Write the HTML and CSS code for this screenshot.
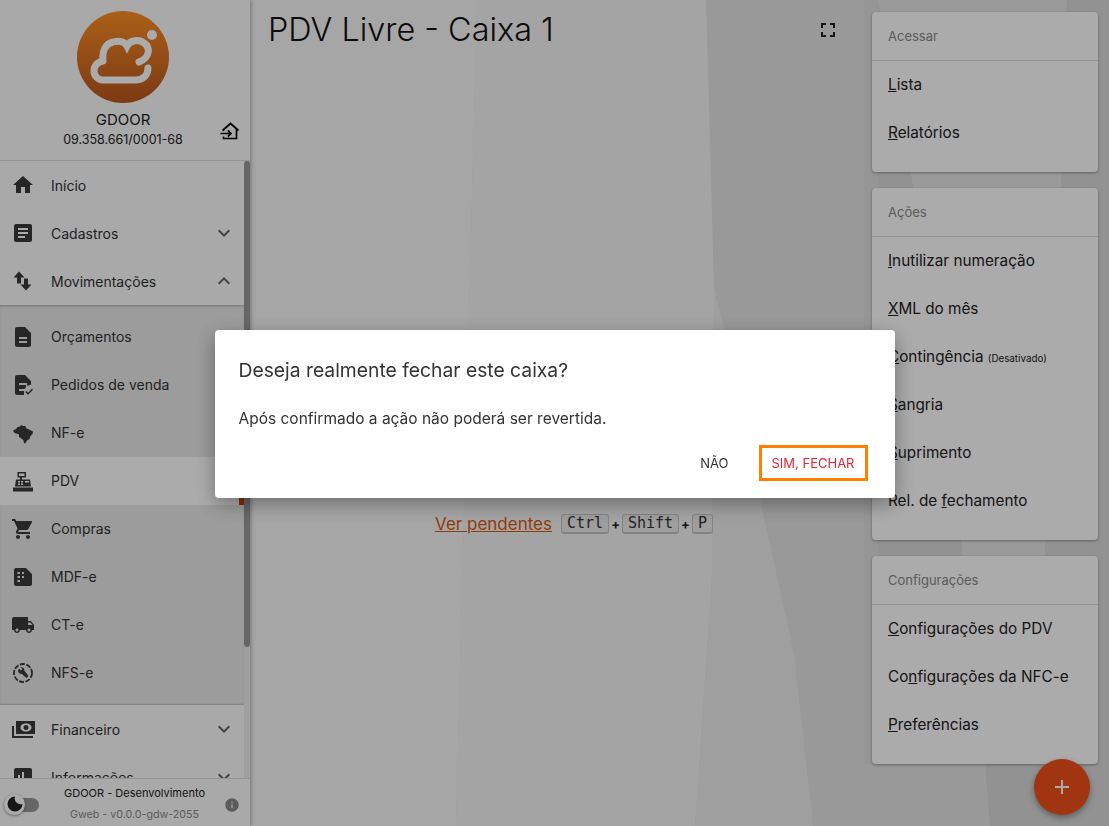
FILE: index.html
```html
<!DOCTYPE html>
<html lang="pt-BR">
<head>
<meta charset="UTF-8">
<title>PDV Livre - Caixa 1</title>
<link rel="stylesheet" href="styles.css">
</head>
<body>
<div class="app">
	<svg class="page-bg" viewBox="0 0 1109 826">
		<rect x="250" y="0" width="614" height="826" fill="#e4e4e4"/>
		<path d="M250 0H477L456 826H250z" fill="#f8f8f8"/>
		<path d="M477 0H706L714 288L712 576L695 826H456z" fill="#f5f5f5"/>
		<path d="M714 288L728 344L766 527L794 654L813 826H695L712 576z" fill="#eeeeee"/>
		<rect x="864" y="0" width="245" height="826" fill="#dadada"/>
		<rect x="864" y="0" width="14" height="826" fill="#e0e0e0"/>
		<path d="M878 0H1067L1061 180L1045 548L1030 764H985L962 548L912 180z" fill="#e6e6e6"/>
		<path d="M864 764H985L990 826H864z" fill="#e4e4e4"/>
	</svg>
	<div class="sidebar">
		<div class="company">
			<svg class="logo" viewBox="0 0 92 92">
				<defs>
					<linearGradient id="logograd" x1="0" y1="0" x2="0" y2="1">
						<stop offset="0" stop-color="#ff8f26"/>
						<stop offset="1" stop-color="#b9561f"/>
					</linearGradient>
				</defs>
				<circle cx="46" cy="46" r="46" fill="url(#logograd)"/>
				<circle cx="75" cy="24" r="5" fill="#fff"/>
				<path d="M26 50C20 51 17 55 17 60C17 65 21 69 26 69H58C66 69 71 64 71 57M26 50C25 41 28 33 36 31C43 29 48 31 50 35C53 29 62 28 67 32C73 36 74 46 62 51" fill="none" stroke="#fff" stroke-width="7" stroke-linecap="round"/>
			</svg>
			<div class="company-name">GDOOR</div>
			<div class="company-doc">09.358.661/0001-68</div>
			<svg class="company-exit" viewBox="0 0 20 18"><path d="M2.500 8.500L10.500 1.500L18.500 8.500M16.500 7V16.500H3.500V14.500M3.500 9V8" fill="none" stroke="#000" stroke-width="1.700"/><path d="M0.500 11.500H11M7.800 8.300L11 11.500L7.800 14.700" fill="none" stroke="#000" stroke-width="1.700"/></svg>
		</div>
		<div class="nav-wrap">
			<div class="nav">
				<a class="nav-item"><svg class="ico" viewBox="0 0 24 24"><path d="M10 20v-6h4v6h5v-8h3L12 3 2 12h3v8z"/></svg><span class="nav-label">Início</span></a>
				<a class="nav-item"><svg class="ico" viewBox="0 0 24 24"><path d="M19 3H5c-1.100 0-2 .9-2 2v14c0 1.100.9 2 2 2h14c1.100 0 2-.9 2-2V5c0-1.100-.9-2-2-2zm-5 14H7v-2h7v2zm3-4H7v-2h10v2zm0-4H7V7h10v2z"/></svg><span class="nav-label">Cadastros</span><svg class="ico chev" viewBox="0 0 24 24"><path d="M16.590 8.590L12 13.170 7.410 8.590 6 10l6 6 6-6z"/></svg></a>
				<a class="nav-item"><svg class="ico" viewBox="0 0 24 24"><path d="M8 2.500L2.500 8.500H6V14.500H10V8.500H13.500zM13 9.500V15.500H9.500L15 21.500L20.500 15.500H17V9.500z"/></svg><span class="nav-label">Movimentações</span><svg class="ico chev" viewBox="0 0 24 24"><path d="M12 8l-6 6 1.410 1.410L12 10.830l4.590 4.580L18 14z"/></svg></a>
				<div class="nav-sub">
					<a class="nav-item"><svg class="ico" viewBox="0 0 24 24"><path d="M14 2H6c-1.100 0-1.990.9-1.990 2L4 20c0 1.100.89 2 1.990 2H18c1.100 0 2-.9 2-2V8l-6-6zm2 16H8v-2h8v2zm0-4H8v-2h8v2z"/></svg><span class="nav-label">Orçamentos</span></a>
					<a class="nav-item"><svg class="ico" viewBox="0 0 24 24"><path d="M14 2H6c-1.100 0-1.990.9-1.990 2L4 20c0 1.100.89 2 1.990 2H13v-4H8v-2h5.500l1.500-1.500V12H8v-2h8v2.800l4-1V8l-6-6z"/><path d="M14.800 18.500L17 20.700L21.500 16.200" fill="none" stroke="#3a3a3a" stroke-width="1.600"/></svg><span class="nav-label">Pedidos de venda</span></a>
					<a class="nav-item"><svg class="ico" viewBox="0 0 24 24"><path d="M2 9.500L5 8L6.500 6L9 5.500L10 4L12 5L14.500 5L15 7L18 8.500L22 10.500L21.500 13L19.500 15L18.500 18L16 19.500L14.500 22L13 22.500L12.500 19.500L10.500 17.500L8 16L8 13.500L5.500 12.500L3.500 12z"/></svg><span class="nav-label">NF-e</span></a>
					<a class="nav-item nav-item-on"><svg class="ico" viewBox="0 0 24 24"><path d="M2 18.500h20v4H2zM4 17.500l1-7h4V8.500H6.500V3H15v5.500h-4v2h8l1 7zM8 4.500V7h5.500V4.500zM7 12v1.500h2V12zM10 12v1.500h2V12zM7 14.500V16h2v-1.500zM10 14.500V16h2v-1.500zM14 12v1.500h4V12z" fill-rule="evenodd"/></svg><span class="nav-label">PDV</span></a>
					<a class="nav-item"><svg class="ico" viewBox="0 0 24 24"><path d="M7 18c-1.100 0-1.990.9-1.990 2S5.900 22 7 22s2-.9 2-2-.9-2-2-2zM1 2v2h2l3.600 7.590-1.350 2.450c-.16.28-.25.61-.25.96 0 1.100.9 2 2 2h12v-2H7.420c-.14 0-.25-.11-.25-.25l.03-.12.9-1.630h7.450c.75 0 1.410-.41 1.750-1.030l3.580-6.490c.08-.14.12-.31.12-.48 0-.55-.45-1-1-1H5.210l-.94-2H1zm16 16c-1.100 0-1.990.9-1.990 2s.89 2 1.990 2 2-.9 2-2-.9-2-2-2z"/></svg><span class="nav-label">Compras</span></a>
					<a class="nav-item"><svg class="ico" viewBox="0 0 24 24"><path d="M5 3h10l6 6v10c0 1.100-.9 2-2 2H5c-1.100 0-2-.9-2-2V5c0-1.100.9-2 2-2zM6.500 7v2H9V7zM11 7v2h2V7zM6.500 11v2H9v-2zM11 11v2h2v-2zM6.500 15v2H9v-2z" fill-rule="evenodd"/></svg><span class="nav-label">MDF-e</span></a>
					<a class="nav-item"><svg class="ico" viewBox="0 0 24 24"><path d="M20 8h-3V4H3c-1.100 0-2 .9-2 2v11h2c0 1.660 1.340 3 3 3s3-1.340 3-3h6c0 1.660 1.340 3 3 3s3-1.340 3-3h2v-5l-3-4zM6 18.500c-.83 0-1.500-.67-1.500-1.500s.67-1.500 1.500-1.500 1.500.67 1.500 1.500-.67 1.500-1.500 1.500zm13.500-9l1.960 2.500H17V9.500h2.500zm-1.500 9c-.83 0-1.500-.67-1.500-1.500s.67-1.500 1.500-1.500 1.500.67 1.500 1.500-.67 1.500-1.500 1.500z"/></svg><span class="nav-label">CT-e</span></a>
					<a class="nav-item"><svg class="ico" viewBox="0 0 24 24"><circle cx="12" cy="12" r="9" fill="none" stroke="#3a3a3a" stroke-width="1.800" stroke-dasharray="5 1.500"/><path d="M8 7.500L10 9.500L11.500 8L9.500 6.500C11.500 5.800 13.500 7 13.300 9.500L17.500 15L15.500 17L10.500 12.800C8 13 6.500 11 7.300 9z"/></svg><span class="nav-label">NFS-e</span></a>
				</div>
				<a class="nav-item"><svg class="ico" viewBox="0 0 24 24"><path d="M5 2h20v13H5zM15 4.500C11.500 4.500 9.500 6.500 9.500 8.500S11.500 12.500 15 12.500 20.500 10.500 20.500 8.500 18.500 4.500 15 4.500z" fill-rule="evenodd" transform="translate(0 2)"/><circle cx="15" cy="10.500" r="2.500"/><path d="M2 9V20H22" fill="none" stroke="#3a3a3a" stroke-width="2"/></svg><span class="nav-label">Financeiro</span><svg class="ico chev" viewBox="0 0 24 24"><path d="M16.590 8.590L12 13.170 7.410 8.590 6 10l6 6 6-6z"/></svg></a>
				<a class="nav-item"><svg class="ico" viewBox="0 0 24 24"><path d="M19 3H5c-1.100 0-2 .9-2 2v14c0 1.100.9 2 2 2h14c1.100 0 2-.9 2-2V5c0-1.100-.9-2-2-2zM9 17H7v-7h2v7zm4 0h-2V7h2v10zm4 0h-2v-4h2v4z"/></svg><span class="nav-label">Informações</span><svg class="ico chev" viewBox="0 0 24 24"><path d="M16.590 8.590L12 13.170 7.410 8.590 6 10l6 6 6-6z"/></svg></a>
			</div>
			<div class="scroll-track"><div class="scroll-thumb"></div></div>
		</div>
		<div class="side-foot">
			<div class="toggle"><div class="toggle-knob"><svg viewBox="0 0 24 24"><path d="M12 2a10 10 0 1 0 10 10 8 8 0 0 1-10-10z"/></svg></div></div>
			<div class="foot-text">
				<div class="foot-a">GDOOR - Desenvolvimento</div>
				<div class="foot-b">Gweb - v0.0.0-gdw-2055</div>
			</div>
			<svg class="foot-info" viewBox="0 0 24 24"><path d="M12 2C6.480 2 2 6.480 2 12s4.480 10 10 10 10-4.480 10-10S17.520 2 12 2zm1 15h-2v-6h2v6zm0-8h-2V7h2v2z"/></svg>
		</div>
	</div>

	<div class="main">
		<div class="title-row">
			<h1 class="title">PDV Livre - Caixa 1</h1>
			<svg class="ico fs" viewBox="0 0 24 24"><path d="M7 14H5v5h5v-2H7v-3zm-2-4h2V7h3V5H5v5zm12 7h-3v2h5v-5h-2v3zM14 5v2h3v3h2V5h-5z"/></svg>
		</div>
		<div class="pending">
			<a class="pending-link">Ver pendentes</a>
			<div class="keys"><kbd>Ctrl</kbd><b>+</b><kbd>Shift</kbd><b>+</b><kbd>P</kbd></div>
		</div>
	</div>

	<div class="aside">
		<div class="card">
			<div class="card-head">Acessar</div>
			<a class="card-item"><u>L</u>ista</a>
			<a class="card-item"><u>R</u>elatórios</a>
		</div>
		<div class="card">
			<div class="card-head">Ações</div>
			<a class="card-item"><u>I</u>nutilizar numeração</a>
			<a class="card-item"><u>X</u>ML do mês</a>
			<a class="card-item"><u>C</u>ontingência <small>(Desativado)</small></a>
			<a class="card-item"><u>S</u>angria</a>
			<a class="card-item"><u>S</u>uprimento</a>
			<a class="card-item">Rel. de <u>f</u>echamento</a>
		</div>
		<div class="card">
			<div class="card-head">Configurações</div>
			<a class="card-item"><u>C</u>onfigurações do PDV</a>
			<a class="card-item">Co<u>n</u>figurações da NFC-e</a>
			<a class="card-item"><u>P</u>referências</a>
		</div>
	</div>
</div>

<div class="fab"><svg viewBox="0 0 24 24"><path d="M19 13h-6v6h-2v-6H5v-2h6V5h2v6h6v2z"/></svg></div>

<div class="scrim">
	<div class="dialog">
		<div class="dialog-title">Deseja realmente fechar este caixa?</div>
		<div class="dialog-text">Após confirmado a ação não poderá ser revertida.</div>
		<div class="dialog-actions">
			<button class="btn">NÃO</button>
			<button class="btn btn-yes">SIM, FECHAR</button>
		</div>
	</div>
</div>
</body>
</html>
```

FILE: styles.css
```css
*{
	margin: 0;
	padding: 0;
	box-sizing: border-box;
}
html, body{
	height: 100%;
	overflow: hidden;
}
body{
	font-family: Inter, "Noto Sans", "Liberation Sans", sans-serif;
	font-size: 14px;
	color: #222;
	background: #e4e4e4;
}
.app{
	display: flex;
	height: 826px;
	position: relative;
}
.page-bg{
	position: absolute;
	left: 0;
	top: 0;
	width: 1109px;
	height: 826px;
}

/* sidebar */
.sidebar{
	width: 250px;
	height: 100%;
	display: flex;
	flex-direction: column;
	background: #fcfcfc;
	box-shadow: 1px 0 4px rgba(0,0,0,0.3);
	position: relative;
	z-index: 2;
}
.company{
	height: 161px;
	flex: none;
	border-bottom: 1px solid #ddd;
	display: flex;
	flex-direction: column;
	align-items: center;
	padding: 11px 4px 0 0;
	position: relative;
}
.logo{
	width: 92px;
	height: 92px;
	flex: none;
}
.company-name{
	margin-top: 8px;
	font-size: 15px;
	line-height: 18px;
}
.company-doc{
	font-size: 12.500px;
	line-height: 18px;
	margin-top: 2px;
}
.company-exit{
	position: absolute;
	right: 10px;
	top: 122px;
	width: 20px;
	height: 18px;
}
.nav-wrap{
	flex: 1;
	min-height: 0;
	display: flex;
	overflow: hidden;
}
.nav{
	flex: 1;
	min-width: 0;
}
.scroll-track{
	width: 6px;
	flex: none;
	background: #eee;
}
.scroll-thumb{
	height: 486px;
	background: #999;
	border-radius: 3px;
}
.nav-item{
	display: flex;
	align-items: center;
	height: 48px;
	padding: 0 8px 0 11px;
	gap: 16px;
	color: #333;
}
.nav-label{
	flex: 1;
	font-size: 14px;
}
.nav-sub .nav-label{
	padding-bottom: 1px;
}
.ico{
	width: 24px;
	height: 24px;
	flex: none;
	fill: #3a3a3a;
}
.chev{
	fill: #666;
}
.nav-sub{
	padding: 8px 0;
	background: #e9e9e9;
	box-shadow: inset 0 3px 3px -2px rgba(0,0,0,0.25), inset 0 -2px 2px -1px rgba(0,0,0,0.2);
}
.nav-item-on{
	background: #fff;
	border-right: 5px solid #d33c10;
}
.side-foot{
	height: 48px;
	flex: none;
	border-top: 1px solid #ddd;
	background: #fcfcfc;
	display: flex;
	align-items: center;
	position: relative;
}
.toggle{
	width: 24px;
	height: 14px;
	margin: 4px 0 0 15px;
	flex: none;
	background: #999;
	border-radius: 7px;
	position: relative;
}
.toggle-knob{
	position: absolute;
	left: -11px;
	top: -4px;
	width: 21px;
	height: 21px;
	border-radius: 50%;
	background: #fff;
	box-shadow: 0 1px 3px rgba(0,0,0,0.4);
	display: flex;
	align-items: center;
	justify-content: center;
}
.toggle-knob svg{
	width: 18px;
	height: 18px;
	fill: #222;
}
.foot-text{
	flex: 1;
	text-align: center;
	font-size: 11px;
	line-height: 21px;
	margin-left: 6px;
	padding-top: 3px;
}
.foot-a{
	color: #222;
}
.foot-b{
	color: #8a8a8a;
	font-size: 10.700px;
}
.foot-info{
	width: 16px;
	height: 16px;
	margin: 4px 10px 0 0;
	fill: #888;
}

/* main */
.main{
	flex: 1;
	min-width: 0;
	position: relative;
	overflow: hidden;
	display: flex;
	flex-direction: column;
}
.title-row{
	display: flex;
	align-items: center;
	justify-content: space-between;
	height: 60px;
	padding: 0 24px 0 18px;
}
.title{
	font-size: 32.400px;
	font-weight: 300;
	color: #111;
	margin-top: -2px;
}
.fs{
	fill: #222;
}
.pending{
	display: flex;
	align-items: center;
	justify-content: center;
	gap: 9px;
	margin-top: 452px;
	padding-left: 34px;
	height: 24px;
}
.pending-link{
	color: #d9590f;
	font-size: 17px;
	text-decoration: underline;
}
.keys{
	display: flex;
	align-items: center;
	gap: 2px;
}
.keys b{
	font-size: 13px;
	font-weight: 700;
}
kbd{
	font-family: "DejaVu Sans Mono", "Liberation Mono", monospace;
	font-size: 15px;
	line-height: 17px;
	padding: 0 5px;
	color: #333;
	background: #ececec;
	border: 1px solid #c4c4c4;
	border-bottom-width: 2px;
	border-radius: 3px;
}

/* right panel */
.aside{
	width: 245px;
	flex: none;
	display: flex;
	flex-direction: column;
	gap: 16px;
	padding: 12px 11px 0 8px;
	position: relative;
}
.card{
	background: #fff;
	border-radius: 4px;
	box-shadow: 0 1px 3px rgba(0,0,0,0.35);
	padding-bottom: 15px;
}
.card-head{
	height: 49px;
	line-height: 48px;
	padding-left: 16px;
	font-size: 13px;
	color: #8a8a8a;
	border-bottom: 1px solid #ddd;
}
.card-item{
	display: block;
	height: 48px;
	line-height: 48px;
	padding-left: 16px;
	font-size: 15.300px;
	color: #222;
	white-space: nowrap;
}
.card-item small{
	font-size: 9.800px;
}

/* fab */
.fab{
	position: fixed;
	right: 19px;
	bottom: 11px;
	width: 56px;
	height: 56px;
	border-radius: 50%;
	background: #f04f1c;
	box-shadow: 0 3px 6px rgba(0,0,0,0.35);
	display: flex;
	align-items: center;
	justify-content: center;
	z-index: 3;
}
.fab svg{
	width: 24px;
	height: 24px;
	fill: #fff;
}

/* dialog */
.scrim{
	position: fixed;
	left: 0;
	top: 0;
	width: 100%;
	height: 100%;
	padding-top: 2px;
	background: rgba(0,0,0,0.33);
	display: flex;
	align-items: center;
	justify-content: center;
	z-index: 10;
}
.dialog{
	width: 680px;
	height: 168px;
	background: #fff;
	border-radius: 4px;
	box-shadow: 0 6px 20px rgba(0,0,0,0.35);
	padding: 24px 27px 17px 24px;
	display: flex;
	flex-direction: column;
}
.dialog-title{
	font-size: 19.300px;
	line-height: 32px;
	color: #333;
}
.dialog-text{
	font-size: 15.500px;
	line-height: 22px;
	margin-top: 22px;
	color: #333;
}
.dialog-actions{
	display: flex;
	justify-content: flex-end;
	align-items: center;
	gap: 17px;
	margin-top: auto;
}
.btn{
	font-family: inherit;
	font-size: 13px;
	height: 36px;
	padding: 0 10px;
	color: #333;
	background: none;
	border: 3px solid transparent;
}
.btn-yes{
	color: #e32636;
	border-color: #ff8000;
}
```
